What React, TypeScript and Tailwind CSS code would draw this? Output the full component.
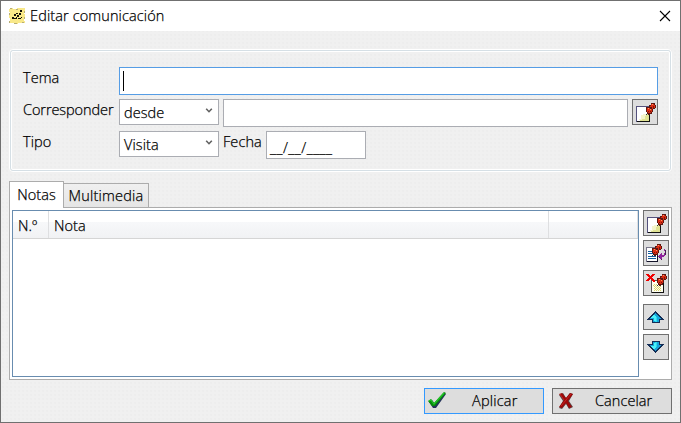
import type { ReactNode } from "react";

const face = "whitespace-nowrap text-[14.5px] font-light leading-5 text-black [-webkit-text-stroke:0.25px_#000]";
const text = `${face} tracking-[0.08px]`;

function Pin() {
  return (
    <g>
      <path d="M13 14h1v-1h1v-1h1v1h-1v1h-1v1h-1z" fill="#2b3b4c" />
      <path d="M13 7h3V5h2V3h4v2h1v3h-1v1h-2v3h-1v2h-2v1h-2v-1h-1v-2h-1z" fill="#5c1710" />
      <path d="M14 8h3v1h2v3h-1v1h-3v-1h-1z" fill="#dc2b12" />
      <path d="M17 6h1V4h3v1h1v3h-2v1h-1V7h-2z" fill="#dc2b12" />
      <path d="M15 8h1v1h-1zM19 4h1v1h-1zM17 9h1v1h-1z" fill="#ff9663" />
      <path d="M17 11h1v1h-1zM20 6h1v2h-1zM15 11h1v1h-1z" fill="#7b160b" />
    </g>
  );
}

function NewNoteIcon() {
  return (
    <svg width="24" height="24" shapeRendering="crispEdges">
      <path d="M3 6h14v16H3z" fill="#55527d" />
      <path d="M4 7h12v14H4z" fill="#fff" />
      <path d="M11 14h5v7H7v-1h2v-2h2z" fill="#e1e494" />
      <path d="M8 15h2v-1h3v2h-1v3H9v1H6v-1h2z" fill="#f4f5cc" />
      <path d="M16 12h1v10H4v-1h12z" fill="#111" />
      <Pin />
    </svg>
  );
}

function EditNoteIcon() {
  return (
    <svg width="24" height="24" shapeRendering="crispEdges">
      <path d="M2 6h12v15H2z" fill="#77758a" />
      <path d="M3 7h10v13H3z" fill="#fff" />
      <path d="M4 10h4v1H4zM4 12h6v1H4zM4 15h8v1H4zM4 17h8v1H4z" fill="#145d9d" />
      <path d="M13 13h1v8H3v-1h10z" fill="#15152a" />
      <g transform="translate(-5 0)"><Pin /></g>
      <path d="M20 8h1v1h1v5h-1v1h-1v1h-2v3h-1v-1h-1v-1h-1v-1h-1v-1h1v-1h1v-1h1v-1h1v2h2v-2h1v-2h-1z" fill="#8e239c" />
      <path d="M21 9h1v5h-1zM17 18h1v1h-1zM15 16h1v1h-1z" fill="#4a2055" />
    </svg>
  );
}

function DeleteNoteIcon() {
  return (
    <svg width="24" height="24" shapeRendering="crispEdges">
      <path d="M7 9h13v13H7z" fill="#555" />
      <path d="M8 10h11v11H8z" fill="#fffef0" />
      <path d="M10 13h1v1h-1zM12 13h1v1h-1zM14 13h1v1h-1zM9 14h1v1H9zM11 14h1v1h-1zM13 14h1v1h-1zM15 14h1v1h-1zM10 15h1v1h-1zM12 15h1v1h-1zM14 15h1v1h-1zM16 15h1v1h-1zM11 16h1v1h-1zM13 16h1v1h-1zM15 16h1v1h-1zM10 17h1v1h-1zM12 17h1v1h-1zM14 17h1v1h-1zM16 17h1v1h-1zM11 18h1v1h-1zM13 18h1v1h-1zM15 18h1v1h-1zM10 19h1v1h-1zM12 19h1v1h-1zM14 19h1v1h-1zM16 19h1v1h-1z" fill="#d8d56f" />
      <path d="M19 12h1v10H8v-1h11z" fill="#111" />
      <Pin />
      <path d="M2 3h3v1h1v1h1V4h1V3h3v1h-1v1H9v1H8v1h1v1h1v1h1v2H9v-1H8V9H7V8H6v1H5v1H2V9h1V8h1V7h1V6H4V5H3V4H2z" fill="#f00000" />
    </svg>
  );
}

function ArrowIcon({ down = false }: { down?: boolean }) {
  return (
    <svg width="24" height="24" shapeRendering="crispEdges">
      <g transform={down ? "translate(0 24) scale(1 -1)" : undefined}>
        <path d="M11 6h1v1h1v1h1v1h1v1h1v1h1v1h1v1h1v1h1v1h-4v3H8v-3H3v-1h1v-1h1v-1h1v-1h1v-1h1V9h1V8h1V7h1z" fill="#142d56" />
        <path d="M11 8h1v1h1v1h1v1h1v1h1v1h1v1h-2v3H9v-3H6v-1h1v-1h1v-1h1v-1h1V9h1z" fill="#15a4da" />
        <path d="M10 10h1v1h1v5h-2v-3H7v-1h1v-1h1v-1h1z" fill="#4af2fa" />
        <path d="M12 12h1v5h-2v-1h1z" fill="#2adaf0" />
      </g>
    </svg>
  );
}

function IconButton({ children, label }: { children: ReactNode; label: string }) {
  return (
    <button aria-label={label} className="block size-[26px] shrink-0 border border-[#707070] bg-[#ddd]">
      {children}
    </button>
  );
}

function Combo({ value }: { value: string }) {
  return (
    <div className="flex h-[26px] w-[100px] items-start justify-between border border-[#abadb3] bg-white pt-[3px] pr-[5px] pl-1">
      <span className={text}>{value}</span>
      <svg className="mt-[5px]" width="8" height="6"><path d="M1.2.8 4 3.7 6.8.8" fill="none" stroke="#606060" strokeWidth="1.6" /></svg>
    </div>
  );
}

export default function App() {
  return (
    <div className="flex h-[423px] w-[681px] flex-col border border-[#707070] bg-[#f0f0f0] bg-[radial-gradient(circle,#ededed_0.7px,transparent_0.8px)] bg-[size:4px_4px] font-['Open_Sans','Noto_Sans',sans-serif]">
      <header className="flex h-[30px] shrink-0 items-center bg-white pl-2 pr-[9px]">
        <svg className="mr-1" width="17" height="17" shapeRendering="crispEdges">
          <path d="M1 0h3v1h4V0h8v3h-1v3h1v4h-1v3h1v2H9v1H6v-1H0v-2h1v-3H0V7h1V4H0V1h1z" fill="#f8e889" />
          <path d="M1 0h2v1H1zM7 1h2v1H7zM15 3h1v2h-1zM0 5h1v2H0zM15 9h1v2h-1zM0 13h1v2H0zM5 15h3v1H5zM13 14h2v1h-2z" fill="#b7ad75" />
          <path d="M11 2h2v2h-2zM7 5h2v1H7zM10 5h2v2h-2zM5 6h2v2H5zM8 7h2v2H8zM12 9h1v1h-1zM3 9h2v2H3zM7 9h1v2H7zM3 10h5v1H3zM9 10h3v1H9z" fill="#14120b" />
        </svg>
        <h1 className={`${face} tracking-[0.12px]`}>Editar comunicación</h1>
        <svg className="ml-auto" width="12" height="12"><path d="m1 1 10 10M11 1 1 11" stroke="#000" strokeWidth="1.1" /></svg>
      </header>
      <section className="mx-2 mt-[18px] h-[123px] shrink-0 rounded-[4px] border border-white">
        <div className="h-full rounded-[3px] border border-[#d5dfe5]">
          <div className="flex h-full flex-col gap-1 rounded-[2px] border border-white pt-[15px] pl-[11px]">
            <div className="flex h-7 items-start">
              <label className={`${text} w-24 pt-px`}>Tema</label>
              <div className="h-7 w-[539px] border border-[#569de5] bg-white pt-[3px] pl-[3px]"><div className="h-5 w-px bg-black" /></div>
            </div>
            <div className="flex h-7 items-start">
              <label className={`${face} w-24 pt-px tracking-[-0.08px]`}>Corresponder</label>
              <Combo value="desde" />
              <div className="ml-1 mr-1 h-7 w-[405px] border border-[#abadb3] bg-white" />
              <IconButton label="Nuevo"><NewNoteIcon /></IconButton>
            </div>
            <div className="flex h-7 items-start">
              <label className={`${text} w-24 pt-px`}>Tipo</label>
              <Combo value="Visita" />
              <label className={`${text} ml-1 w-[43px] pt-px`}>Fecha</label>
              <div className="h-7 w-[100px] border border-[#abadb3] bg-white pt-[3px] pl-[3px]"><span className={`${face} tracking-[0.5px]`}>__/__/____</span></div>
            </div>
          </div>
        </div>
      </section>
      <nav className="relative z-10 mt-[9px] ml-2 -mb-px flex h-[27px] shrink-0 items-end">
        <button className="flex h-[27px] w-[55px] justify-center border border-b-0 border-[#acacac] bg-white pt-[3px]"><span className={text}>Notas</span></button>
        <button className="-ml-px mb-px flex h-6 w-[86px] justify-center border border-b-0 border-[#acacac] bg-linear-to-b from-[#f0f0f0] to-[#e5e5e5] pt-[2px]"><span className={`${face} tracking-[0.2px]`}>Multimedia</span></button>
      </nav>
      <main className="ml-2 flex h-[173px] w-[663px] shrink-0 border border-[#acacac] bg-white p-[2px]">
        <div className="h-[167px] w-[627px] border border-[#688caf]">
          <div className="flex h-7 border-b border-[#d5d5d5] bg-linear-to-b from-white from-40% via-[#f7f8fa] via-41% to-[#f1f2f4]">
            <div className="w-9 border-r border-[#dedfe1] pt-0.5 pl-[5px]"><span className={text}>N.º</span></div>
            <div className="w-[500px] border-r border-[#dedfe1] pt-0.5 pl-[5px]"><span className={text}>Nota</span></div>
            <div className="flex-1 border-r border-[#dedfe1]" />
          </div>
        </div>
        <aside className="ml-1 flex flex-col gap-1">
          <IconButton label="Añadir nota"><NewNoteIcon /></IconButton>
          <IconButton label="Editar nota"><EditNoteIcon /></IconButton>
          <IconButton label="Eliminar nota"><DeleteNoteIcon /></IconButton>
          <div className="mt-1 flex flex-col gap-1">
            <IconButton label="Subir"><ArrowIcon /></IconButton>
            <IconButton label="Bajar"><ArrowIcon down /></IconButton>
          </div>
        </aside>
      </main>
      <footer className="mt-2 mr-2 flex justify-end gap-2">
        <button className="flex h-[26px] w-[120px] items-center border border-[#3399ff] bg-[#ddd] pl-[3px]">
          <svg width="20" height="20" viewBox="0 0 20 20">
            <path d="m1 11 3-2 3 4L16 2l2 1L8 17H5Z" fill="#24335a" />
            <path d="m0 10 3-2 3 4L16 1l2 1L7 15H4Z" fill="#078c0c" />
            <path d="m1 10 2-1 3 4L16 2" fill="none" stroke="#23c52a" strokeWidth="1.2" />
          </svg>
          <span className={`${face} ml-6 tracking-[0.2px]`}>Aplicar</span>
        </button>
        <button className="flex h-[26px] w-[120px] items-center border border-[#707070] bg-[#ddd] pl-[5px]">
          <svg width="16" height="20" viewBox="0 0 16 20">
            <path d="m1 4 4-2 3 5 4-5 3 1-4 7 4 6-4 2-3-5-4 5-3-1 4-7Z" fill="#59484a" />
            <path d="m1 3 3-1 4 5 4-5 3 1-5 7 4 6-3 1-3-5-4 5-3-1 5-7Z" fill="#9c0909" />
            <path d="m2 3 4 6M13 3 3 15" stroke="#c52424" fill="none" />
          </svg>
          <span className={`${text} ml-[21px]`}>Cancelar</span>
        </button>
      </footer>
    </div>
  );
}
